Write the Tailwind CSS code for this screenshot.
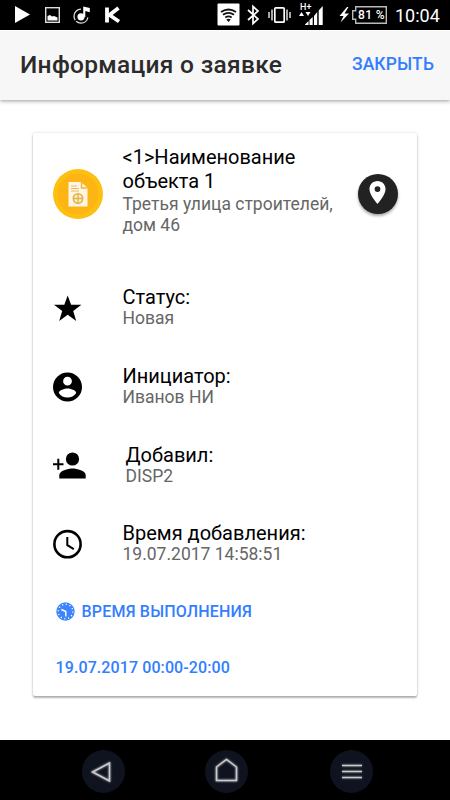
<!DOCTYPE html>
<html lang="ru">
<head>
<meta charset="utf-8">
<meta name="viewport" content="width=device-width, initial-scale=1">
<title>Информация о заявке</title>
<script src="https://cdn.jsdelivr.net/npm/@tailwindcss/browser@4"></script>
</head>
<body class="bg-white font-['Roboto','Liberation_Sans',sans-serif] text-black">
<div class="flex h-[800px] w-[450px] flex-col overflow-hidden">
  <!-- Status bar -->
  <div class="flex h-[30px] shrink-0 items-center bg-black text-white">
    <svg class="h-[30px] w-[390px] shrink-0" viewBox="0 0 390 30" fill="none">
      <path d="M15 6v17l15-8.500z" fill="#fff"/>
      <rect x="45.700" y="7.700" width="13.600" height="14.600" stroke="#ddd" stroke-width="1.400"/>
      <path d="M47.500 20.500v-4.500l2.500-1 2 1.500 2-0.500 3.500 1.500v3z" fill="#fff"/>
      <path d="M81 9.200a7 7 0 1 0 7 7" stroke="#ddd" stroke-width="1.300" stroke-dasharray="15 1.500"/>
      <circle cx="81" cy="16.800" r="3.600" fill="#fff"/>
      <path d="M83.200 17V6.500l6.600 1.500v4.300l-4.500-1.300V17z" fill="#fff"/>
      <path d="M107 7.500v15M118.500 8l-9 7 9.500 6.500" stroke="#fff" stroke-width="3.800"/>
      <rect x="217.500" y="3.500" width="22" height="22" rx="1" fill="#fff"/>
      <path d="M221 12q7.500-5 15 0M223 14.800q5.500-3.800 11 0M225.300 17.500q3.200-2.200 6.400 0" stroke="#111" stroke-width="1.800"/>
      <path d="M226.300 19.500q2.200-1.500 4.400 0l-2.200 2.500z" fill="#111"/>
      <path d="M248 10l10 9-5 4.500v-17l5 4.500-10 9" stroke="#fff" stroke-width="1.700"/>
      <rect x="274.800" y="7.800" width="9.400" height="14.400" rx="1" stroke="#fff" stroke-width="1.700"/>
      <path d="M272 9.500v11M269 12v6M287 9.500v11M290 12v6" stroke="#fff" stroke-width="1.300"/>
      <path d="M299 16l2.500-4 2.500 4zM305.500 12h5l-2.500 4z" fill="#fff"/>
      <path d="M305 24.500l3.500-3.500v4h-3.500zM309.500 20l3.200-3v8h-3.200zM314 16l3.200-4v13h-3.200zM318.700 10.500l4-4.500v19h-4z" fill="#fff"/>
      <text x="300" y="10" fill="#fff" font-size="9" font-weight="500">H+</text>
      <path d="M347 7l-7.500 9h4l-3 6.500 8.500-9h-4.500l4-6.500z" fill="#fff"/>
      <path d="M355.700 6.700h30.600v16.600h-30.600v-4h-3v-8.600h3z" stroke="#bbb" stroke-width="1.400"/>
      <text x="358" y="19.300" fill="#fff" font-size="12" font-weight="500" textLength="26.500">81 %</text>
    </svg>
    <span class="ml-[5px] pt-px text-[18px] leading-[30px]">10:04</span>
  </div>

  <!-- Header -->
  <header class="relative flex h-[70px] shrink-0 items-center justify-between border-t border-white bg-[#f7f7f7] pr-4 pl-5 shadow-[0_1px_4px_rgba(0,0,0,0.4)]">
    <h1 class="text-[24.500px] font-medium tracking-[0.3px] whitespace-nowrap text-[#2b2b2b]">Информация о заявке</h1>
    <button class="pb-[3px] text-[17.500px] font-medium tracking-[0.1px] text-[#327eff]">ЗАКРЫТЬ</button>
  </header>

  <!-- Content -->
  <main class="grow px-[33px] pt-[33px]">
    <section class="flex h-[563px] flex-col rounded-[2px] bg-white shadow-[0_2px_2px_rgba(0,0,0,0.28),0_0_3px_rgba(0,0,0,0.16)]">
      <div class="flex h-[135px] shrink-0 pl-[19.500px]">
        <svg class="mt-[36px] h-[50px] w-[50px] shrink-0" viewBox="0 0 50 50">
          <circle cx="25" cy="25" r="25" fill="#fdc010"/>
          <circle cx="25" cy="25" r="20.500" fill="#fdb515"/>
          <path d="M15.500 13h12.500l6.500 6v18.500h-19z" fill="#fff6e4"/>
          <path d="M28.500 13v6h6" fill="none" stroke="#f0b440" stroke-width="1.500"/>
          <path d="M18 17h6M18 19.500h8M18 22h8" stroke="#e5b964" stroke-width="1"/>
          <circle cx="25" cy="29.500" r="4.700" fill="#fff0c3" stroke="#e3b04e" stroke-width="1.600"/>
          <path d="M20.500 29.500h9M25 25v9" stroke="#e3b04e" stroke-width="1.300"/>
        </svg>
        <div class="mt-[12px] ml-[20px] w-[235px] shrink-0">
          <h2 class="text-[20px] leading-[24px]">&lt;1&gt;Наименование<br>объекта 1</h2>
          <p class="pt-px text-[17.500px] leading-[20.500px] text-[#666]">Третья улица строителей,<br>дом 46</p>
        </div>
        <button class="mt-[41px] flex h-10 w-10 items-center justify-center rounded-full bg-[#222] shadow-[0_2px_3px_rgba(0,0,0,0.35)]">
          <svg class="-mt-[3px] h-[23px] w-[17px]" viewBox="5 2 14 20"><path d="M12 2C8.100 2 5 5.100 5 9c0 5.300 7 13 7 13s7-7.700 7-13c0-3.900-3.100-7-7-7zm0 9.500a2.500 2.500 0 1 1 0-5 2.500 2.500 0 0 1 0 5z" fill="#fff"/></svg>
        </button>
      </div>

      <div class="flex h-[79px] shrink-0 items-center pl-[19.500px]">
        <svg class="mt-[2px] h-[30px] w-[30px] shrink-0" viewBox="0 0 30 30"><path d="M14.700 1.500l3.400 9.300h10.300l-8.200 6.100 3 10-8.500-6.200-8.500 6.200 3-10-8.200-6.100h10.300z"/></svg>
        <div class="ml-10 pb-[2px]"><h3 class="text-[20px] leading-[22px]">Статус:</h3><p class="text-[17.500px] leading-[20px] text-[#666]">Новая</p></div>
      </div>
      <div class="flex h-[79px] shrink-0 items-center pl-[19.500px]">
        <svg class="h-[30px] w-[30px] shrink-0" viewBox="0 0 30 30"><path fill-rule="evenodd" d="M14.500.5a14.500 14.500 0 1 0 0 29 14.500 14.500 0 0 0 0-29zm0 4.300a4.400 4.400 0 1 1 0 8.800 4.400 4.400 0 0 1 0-8.800zm0 20.800a10.400 10.400 0 0 1-8.700-4.600c.1-2.900 5.800-4.500 8.700-4.500s8.600 1.600 8.700 4.500a10.400 10.400 0 0 1-8.700 4.600z"/></svg>
        <div class="ml-10 pb-[2px]"><h3 class="text-[20px] leading-[22px]">Инициатор:</h3><p class="text-[17.500px] leading-[20px] text-[#666]">Иванов НИ</p></div>
      </div>
      <div class="flex h-[79px] shrink-0 items-center pl-[19.500px]">
        <svg class="h-[30px] w-[33px] shrink-0" viewBox="0 0 33 30"><circle cx="19.500" cy="8" r="6.600"/><path d="M6.300 27.500v-3.300c0-4.400 8.800-6.600 13.200-6.600s13.200 2.200 13.200 6.600v3.300z"/><path d="M5.300 7.800v11M0 13.300h10.500" fill="none" stroke="#000" stroke-width="2"/></svg>
        <div class="ml-10 pb-[2px]"><h3 class="text-[20px] leading-[22px]">Добавил:</h3><p class="text-[17.500px] leading-[20px] text-[#666]">DISP2</p></div>
      </div>
      <div class="flex h-[78px] shrink-0 items-center pl-[19.500px]">
        <svg class="h-[30px] w-[30px] shrink-0" viewBox="0 0 30 30" fill="none" stroke="#000"><circle cx="14.500" cy="15.200" r="13.100" stroke-width="2.600"/><path d="M14.300 8v8.200l6.500 4" stroke-width="2"/></svg>
        <div class="ml-10 pb-[2px]"><h3 class="text-[20px] leading-[22px]">Время добавления:</h3><p class="text-[17.500px] leading-[20px] text-[#666]">19.07.2017 14:58:51</p></div>
      </div>

      <div class="flex h-[56px] shrink-0 items-center pt-[2px] pl-[22.500px] text-[16px] font-medium tracking-[0.2px] text-[#327eff]">
        <svg class="mr-[7px] mb-[2px] h-[19px] w-[19px]" viewBox="0 0 19 19"><circle cx="9.500" cy="9.500" r="9.200" fill="#3d84fb"/><circle cx="9.500" cy="9.500" r="7.300" fill="none" stroke="#fff" stroke-width="1.300" stroke-dasharray="1.200 2.622"/><path d="M5.300 7.500l4.500 2v5" fill="none" stroke="#fff" stroke-width="1.400"/></svg>
        ВРЕМЯ ВЫПОЛНЕНИЯ
      </div>
      <div class="flex h-[57px] shrink-0 items-center pt-px pl-[22.500px] text-[16px] font-medium tracking-[0.1px] text-[#327eff]">19.07.2017 00:00-20:00</div>
    </section>
  </main>

  <!-- Navigation bar -->
  <nav class="flex h-[60px] shrink-0 items-center bg-black pt-[3px] pl-[82px]">
    <svg class="h-[43px] w-[43px]" viewBox="0 0 43 43" fill="none"><circle cx="21.500" cy="21.500" r="21.500" fill="#0e131f"/><path class="drop-shadow-[0_0_1px_#ccc]" d="M27.500 13v18l-17-9z" stroke="#ccc" stroke-width="1.500"/></svg>
    <svg class="ml-[80px] h-[43px] w-[43px]" viewBox="0 0 43 43" fill="none"><circle cx="21.500" cy="21.500" r="21.500" fill="#0e131f"/><path class="drop-shadow-[0_0_1px_#ccc]" d="M11.500 17l10-7.500 10 7.500v13.500h-20z" stroke="#ccc" stroke-width="1.500"/></svg>
    <svg class="ml-[82px] h-[43px] w-[43px]" viewBox="0 0 43 43" fill="none"><circle cx="21.500" cy="21.500" r="21.500" fill="#0e131f"/><path class="drop-shadow-[0_0_1px_#999]" d="M12 15.500h20M12 21.500h20M12 27.500h20" stroke="#ccc" stroke-width="1.300"/></svg>
  </nav>
</div>
</body>
</html>
